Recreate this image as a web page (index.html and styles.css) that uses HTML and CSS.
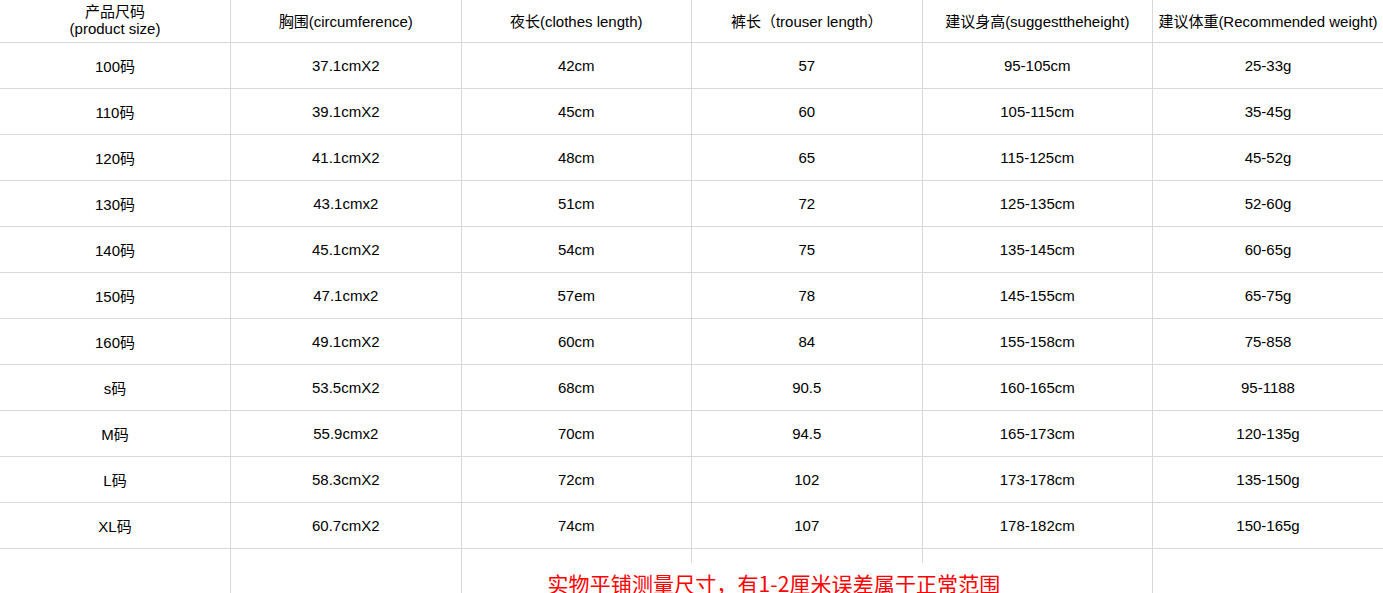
FILE: index.html
```html
<!DOCTYPE html>
<html lang="zh">
<head>
<meta charset="utf-8">
<title>尺码表</title>
<link rel="stylesheet" href="styles.css">
</head>
<body>
<table class="size-table">
  <colgroup>
    <col class="col"><col class="col"><col class="col"><col class="col"><col class="col"><col class="col">
  </colgroup>
  <thead>
    <tr class="head-row">
      <th><div class="two-line"><span>产品尺码</span><span>(product size)</span></div></th>
      <th>胸围(circumference)</th>
      <th>夜长(clothes length)</th>
      <th>裤长（trouser length）</th>
      <th>建议身高(suggesttheheight)</th>
      <th>建议体重(Recommended weight)</th>
    </tr>
  </thead>
  <tbody>
    <tr><td>100码</td><td>37.1cmX2</td><td>42cm</td><td>57</td><td>95-105cm</td><td>25-33g</td></tr>
    <tr><td>110码</td><td>39.1cmX2</td><td>45cm</td><td>60</td><td>105-115cm</td><td>35-45g</td></tr>
    <tr><td>120码</td><td>41.1cmX2</td><td>48cm</td><td>65</td><td>115-125cm</td><td>45-52g</td></tr>
    <tr><td>130码</td><td>43.1cmx2</td><td>51cm</td><td>72</td><td>125-135cm</td><td>52-60g</td></tr>
    <tr><td>140码</td><td>45.1cmX2</td><td>54cm</td><td>75</td><td>135-145cm</td><td>60-65g</td></tr>
    <tr><td>150码</td><td>47.1cmx2</td><td>57em</td><td>78</td><td>145-155cm</td><td>65-75g</td></tr>
    <tr><td>160码</td><td>49.1cmX2</td><td>60cm</td><td>84</td><td>155-158cm</td><td>75-858</td></tr>
    <tr><td>s码</td><td>53.5cmX2</td><td>68cm</td><td>90.5</td><td>160-165cm</td><td>95-1188</td></tr>
    <tr><td>M码</td><td>55.9cmx2</td><td>70cm</td><td>94.5</td><td>165-173cm</td><td>120-135g</td></tr>
    <tr><td>L码</td><td>58.3cmX2</td><td>72cm</td><td>102</td><td>173-178cm</td><td>135-150g</td></tr>
    <tr><td>XL码</td><td>60.7cmX2</td><td>74cm</td><td>107</td><td>178-182cm</td><td>150-165g</td></tr>
    <tr class="note-row">
      <td></td>
      <td></td>
      <td class="note-cell" colspan="3">
        <div class="stubs"><span></span><span></span><span></span></div>
        <p class="note">实物平铺测量尺寸，有1-2厘米误差属于正常范围</p>
      </td>
      <td></td>
    </tr>
  </tbody>
</table>
</body>
</html>
```

FILE: styles.css
```css
html, body {
  margin: 0;
  padding: 0;
  background: #ffffff;
}

body {
  font-family: "Liberation Sans", "Noto Sans CJK SC", sans-serif;
  font-size: 15px;
  color: #000000;
}

.size-table {
  width: 1383px;
  table-layout: fixed;
  border-collapse: collapse;
  border-spacing: 0;
}

.col {
  width: 230.5px;
}

.size-table th,
.size-table td {
  padding: 0;
  text-align: center;
  vertical-align: middle;
  white-space: nowrap;
  font-weight: normal;
  border-right: 1px solid #d9d9d9;
  border-bottom: 1px solid #d9d9d9;
}

.size-table th:last-child,
.size-table td:last-child {
  border-right: none;
}

.head-row th {
  height: 40px;
  padding-bottom: 2px;
}

.two-line {
  display: flex;
  flex-direction: column;
  align-items: center;
  line-height: 17px;
}

.size-table tbody tr {
  height: 46px;
}

.size-table tbody td {
  height: 45px;
}

.note-row td {
  height: 60px;
  border-bottom: none;
  vertical-align: top;
}

.note-cell {
  text-align: left;
}

.stubs {
  display: flex;
  height: 14px;
}

.stubs span {
  flex: 1;
  border-right: 1px solid #d9d9d9;
}

.stubs span:last-child {
  border-right: none;
}

.note {
  margin: 7px 0 0 86px;
  font-family: "Noto Sans CJK SC", sans-serif;
  font-size: 21px;
  letter-spacing: 0.1px;
  line-height: 26px;
  color: #ff0000;
  text-align: left;
}
```
